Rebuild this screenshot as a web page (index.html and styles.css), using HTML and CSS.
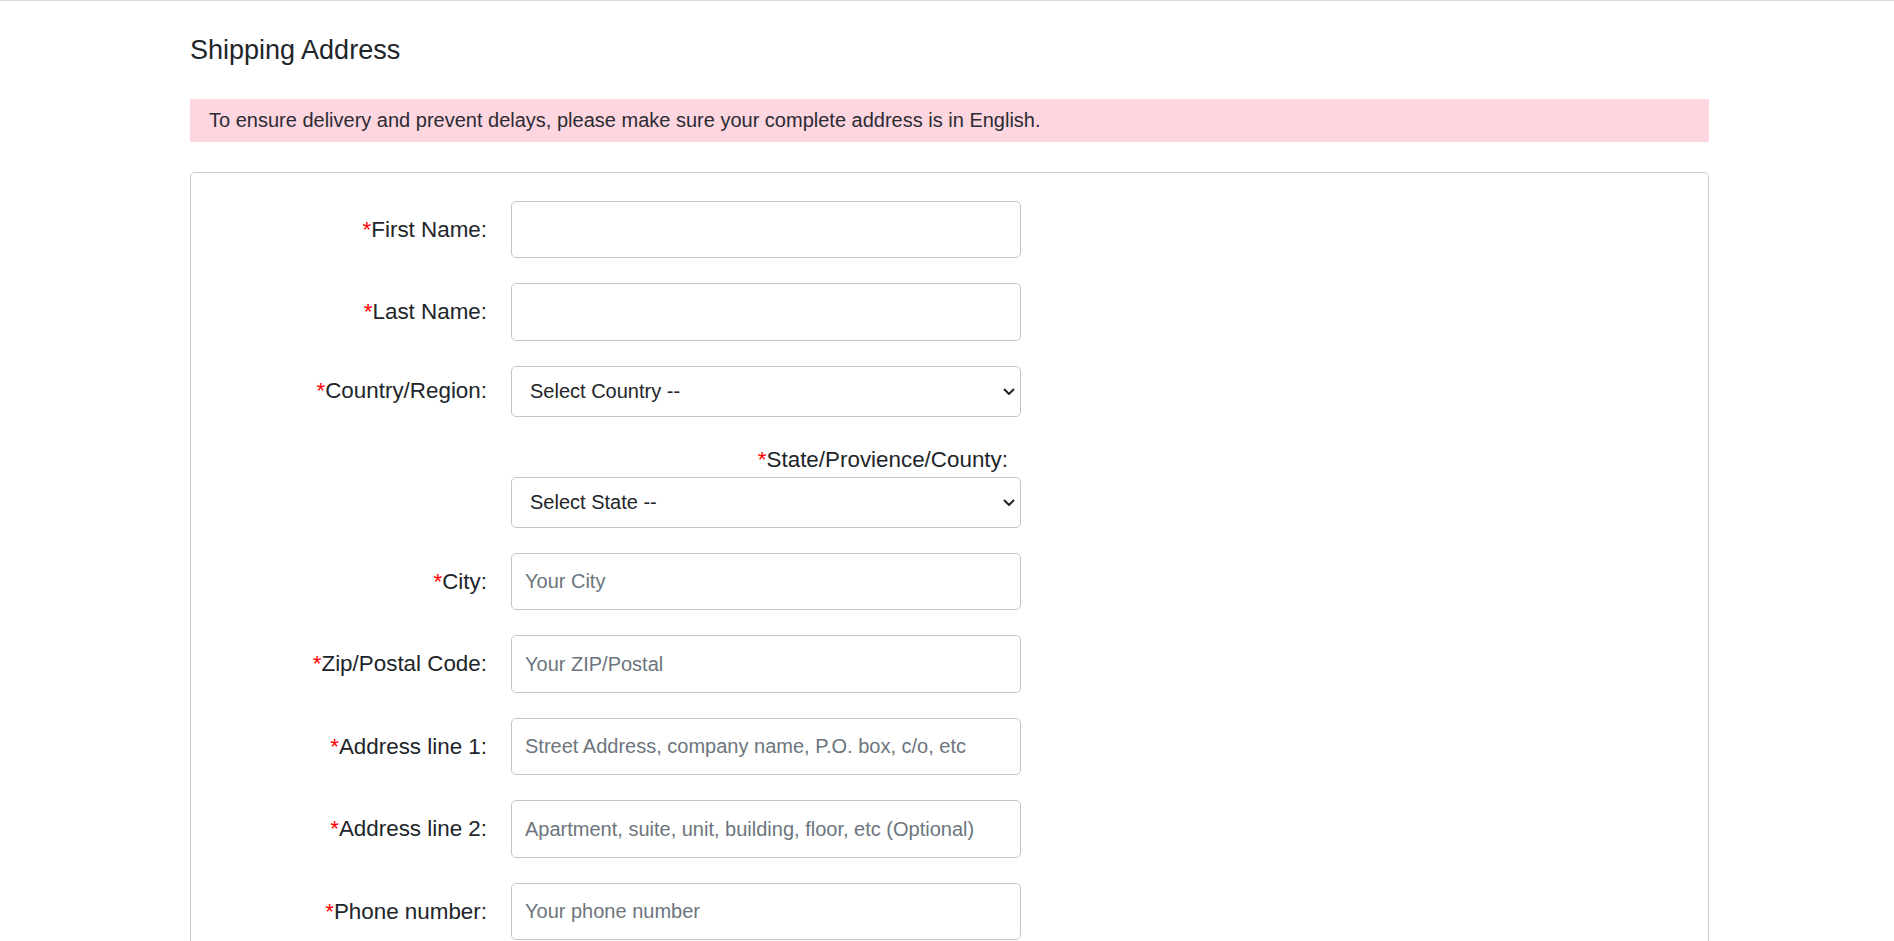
FILE: index.html
```html
<!DOCTYPE html>
<html lang="en">
<head>
<meta charset="utf-8">
<title>Shipping Address</title>
<link rel="stylesheet" href="styles.css">
</head>
<body>
<div class="page">
  <div class="container">
    <h4 class="title">Shipping Address</h4>
    <div class="alert">To ensure delivery and prevent delays, please make sure your complete address is in English.</div>
    <form class="card">
      <div class="row">
        <label class="label"><span class="req">*</span>First Name:</label>
        <input class="field" type="text">
      </div>
      <div class="row">
        <label class="label"><span class="req">*</span>Last Name:</label>
        <input class="field" type="text">
      </div>
      <div class="row">
        <label class="label"><span class="req">*</span>Country/Region:</label>
        <div class="select-wrap">
          <select class="select"><option>Select Country --</option></select>
          <svg class="chev" width="12" height="7" viewBox="0 0 12 7"><path d="M1 1 L6 6 L11 1" fill="none" stroke="#222" stroke-width="2"/></svg>
        </div>
      </div>
      <div class="row row-state">
        <div class="spacer"></div>
        <div class="state-col">
          <label class="state-label"><span class="req">*</span>State/Provience/County:</label>
          <div class="select-wrap">
            <select class="select"><option>Select State --</option></select>
            <svg class="chev" width="12" height="7" viewBox="0 0 12 7"><path d="M1 1 L6 6 L11 1" fill="none" stroke="#222" stroke-width="2"/></svg>
          </div>
        </div>
      </div>
      <div class="row">
        <label class="label"><span class="req">*</span>City:</label>
        <input class="field" type="text" placeholder="Your City">
      </div>
      <div class="row">
        <label class="label"><span class="req">*</span>Zip/Postal Code:</label>
        <input class="field" type="text" placeholder="Your ZIP/Postal">
      </div>
      <div class="row">
        <label class="label"><span class="req">*</span>Address line 1:</label>
        <input class="field" type="text" placeholder="Street Address, company name, P.O. box, c/o, etc">
      </div>
      <div class="row">
        <label class="label"><span class="req">*</span>Address line 2:</label>
        <input class="field" type="text" placeholder="Apartment, suite, unit, building, floor, etc (Optional)">
      </div>
      <div class="row">
        <label class="label"><span class="req">*</span>Phone number:</label>
        <input class="field" type="text" placeholder="Your phone number">
      </div>
    </form>
  </div>
</div>
</body>
</html>
```

FILE: styles.css
```css
* { box-sizing: border-box; }
html, body { margin: 0; padding: 0; }
body {
  font-family: "Liberation Sans", Arial, sans-serif;
  color: #212529;
  background: #fff;
}
.page {
  border-top: 1px solid #dcdcdc;
  padding-top: 32.5px;
  padding-bottom: 40px;
}
.container {
  margin-left: 190px;
  width: 1519px;
}
.title {
  margin: 0;
  font-size: 27px;
  line-height: 32px;
  font-weight: normal;
  color: #212529;
}
.alert {
  margin-top: 33.5px;
  background: #fed6e0;
  padding: 9px 19px;
  font-size: 20px;
  line-height: 24.7px;
  color: #2b2b33;
}
.card {
  margin-top: 30.6px;
  border: 1px solid #c9c9c9;
  border-radius: 5px;
  padding: 27.7px 0 40px 0;
  display: flex;
  flex-direction: column;
  gap: 25px;
}
.row {
  display: flex;
  align-items: center;
}
.label, .spacer {
  width: 320px;
  flex: none;
  text-align: right;
  padding-right: 24px;
  font-size: 22.4px;
  color: #212529;
}
.row-state { align-items: flex-start; }
.state-col {
  width: 510px;
  display: flex;
  flex-direction: column;
}
.state-label {
  display: block;
  text-align: right;
  padding-right: 13px;
  font-size: 22.4px;
  line-height: 35px;
  color: #212529;
}
.req { color: #f00; }
.field {
  width: 510px;
  height: 57.5px;
  border: 1px solid #c6c6c6;
  border-radius: 5px;
  padding: 0 13px;
  font-family: "Liberation Sans", Arial, sans-serif;
  font-size: 20px;
  color: #212529;
  background: #fff;
  outline: none;
}
.field::placeholder { color: #6c757d; }
.select-wrap {
  position: relative;
  width: 510px;
}
.select {
  -webkit-appearance: none;
  appearance: none;
  width: 510px;
  height: 51px;
  border: 1px solid #c6c6c6;
  border-radius: 5px;
  padding: 0 30px 0 18px;
  font-family: "Liberation Sans", Arial, sans-serif;
  font-size: 20px;
  color: #212529;
  background: #fff;
  outline: none;
}
.chev {
  position: absolute;
  right: 6px;
  top: 22px;
  pointer-events: none;
}
```
